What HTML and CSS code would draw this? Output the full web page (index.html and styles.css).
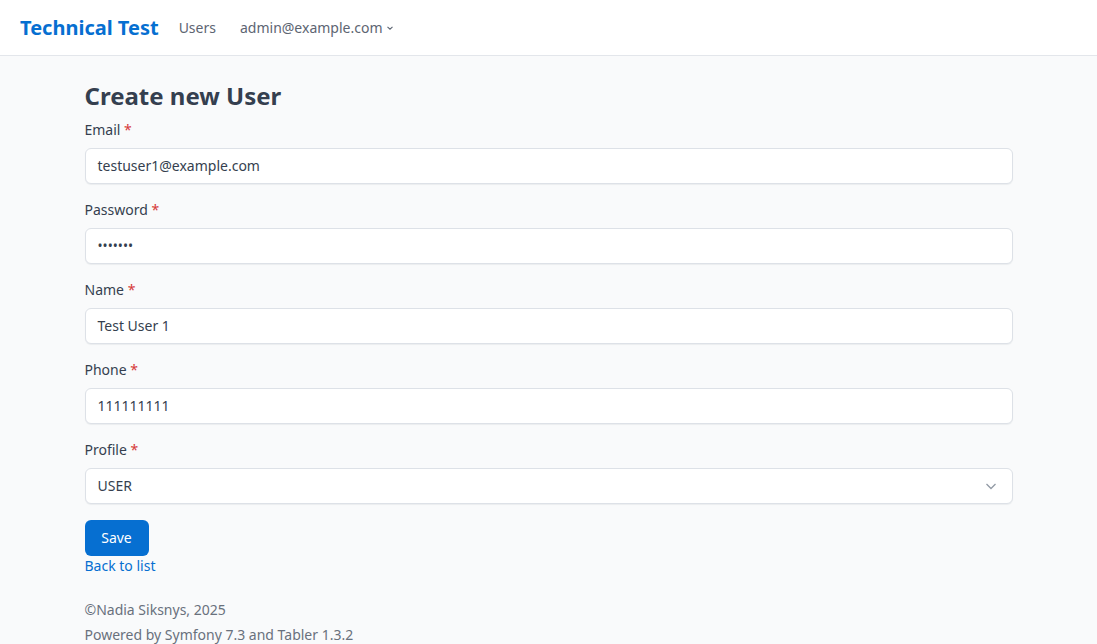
FILE: index.html
```html
<!DOCTYPE html>
<html lang="en">
<head>
<meta charset="utf-8">
<title>Create new User</title>
<link rel="stylesheet" href="styles.css">
</head>
<body>
<header class="navbar">
  <a class="brand" href="#">Technical Test</a>
  <nav class="nav">
    <a class="nav-link" href="#">Users</a>
    <a class="nav-link dropdown" href="#">admin@example.com
      <svg class="caret" width="8" height="8" viewBox="0 0 8 8"><path d="M1.5 2.8 L4 5.2 L6.5 2.8" fill="none" stroke="currentColor" stroke-width="1.1"/></svg>
    </a>
  </nav>
</header>
<main class="container">
  <h1 class="title">Create new User</h1>
  <form class="form">
    <div class="group">
      <label class="label">Email <span class="req">*</span></label>
      <div class="control">testuser1@example.com</div>
    </div>
    <div class="group">
      <label class="label">Password <span class="req">*</span></label>
      <div class="control pw">•••••••</div>
    </div>
    <div class="group">
      <label class="label">Name <span class="req">*</span></label>
      <div class="control">Test User 1</div>
    </div>
    <div class="group">
      <label class="label">Phone <span class="req">*</span></label>
      <div class="control">111111111</div>
    </div>
    <div class="group">
      <label class="label">Profile <span class="req">*</span></label>
      <div class="control select">USER
        <svg class="chev" width="14" height="14" viewBox="0 0 14 14"><path d="M2.5 5 L7 9.5 L11.5 5" fill="none" stroke="#929aa5" stroke-width="1.3"/></svg>
      </div>
    </div>
    <button class="btn" type="button">Save</button>
  </form>
  <a class="back" href="#">Back to list</a>
  <footer class="footer">
    <div>©Nadia Siksnys, 2025</div>
    <div>Powered by Symfony 7.3 and Tabler 1.3.2</div>
  </footer>
</main>
</body>
</html>
```
FILE: styles.css
```css
* { box-sizing: border-box; }
html, body { margin: 0; padding: 0; }
body {
  background: #f9fafb;
  font-family: "Noto Sans", sans-serif;
  font-size: 14px;
  line-height: 20px;
  color: #353f4f;
}
a { text-decoration: none; }
.navbar {
  height: 56px;
  background: #ffffff;
  border-bottom: 1px solid #e3e6eb;
  display: flex;
  align-items: center;
  padding: 0 20px;
}
.brand {
  font-size: 20px;
  font-weight: 700;
  color: #066fd1;
  margin-right: 20px;
  line-height: 28px;
}
.nav { display: flex; gap: 24px; align-items: center; }
.nav-link {
  color: #5d6572;
  font-size: 14px;
  display: flex;
  align-items: center;
  gap: 3px;
}
.caret { margin-top: 1px; }
.container {
  width: 960px;
  margin: 0 auto;
  padding: 24px 16px 0;
}
.title {
  margin: 0 0 8px;
  font-size: 24px;
  line-height: 32px;
  font-weight: 700;
  color: #353f4f;
}
.form { display: flex; flex-direction: column; }
.group { margin-bottom: 16px; }
.label {
  display: block;
  margin-bottom: 8px;
  color: #353f4f;
}
.req { color: #d63939; }
.control {
  height: 36px;
  background: #ffffff;
  border: 1px solid #dde1e7;
  border-radius: 6px;
  padding: 7px 12px;
  box-shadow: 0 1px 1px rgba(24, 36, 51, 0.06);
  color: #353f4f;
  position: relative;
}
.pw { font-size: 13.5px; }
.select { display: flex; align-items: center; justify-content: space-between; padding-right: 14px; }
.btn {
  align-self: flex-start;
  width: 64px;
  height: 36px;
  background: #066fd1;
  color: #ffffff;
  border: none;
  border-radius: 6px;
  font-family: inherit;
  font-size: 14px;
  line-height: 20px;
  padding: 0;
  cursor: pointer;
}
.back {
  display: inline-block;
  color: #066fd1;
}
.footer {
  margin-top: 24px;
  color: #69717d;
  display: flex;
  flex-direction: column;
  gap: 5px;
}
```
